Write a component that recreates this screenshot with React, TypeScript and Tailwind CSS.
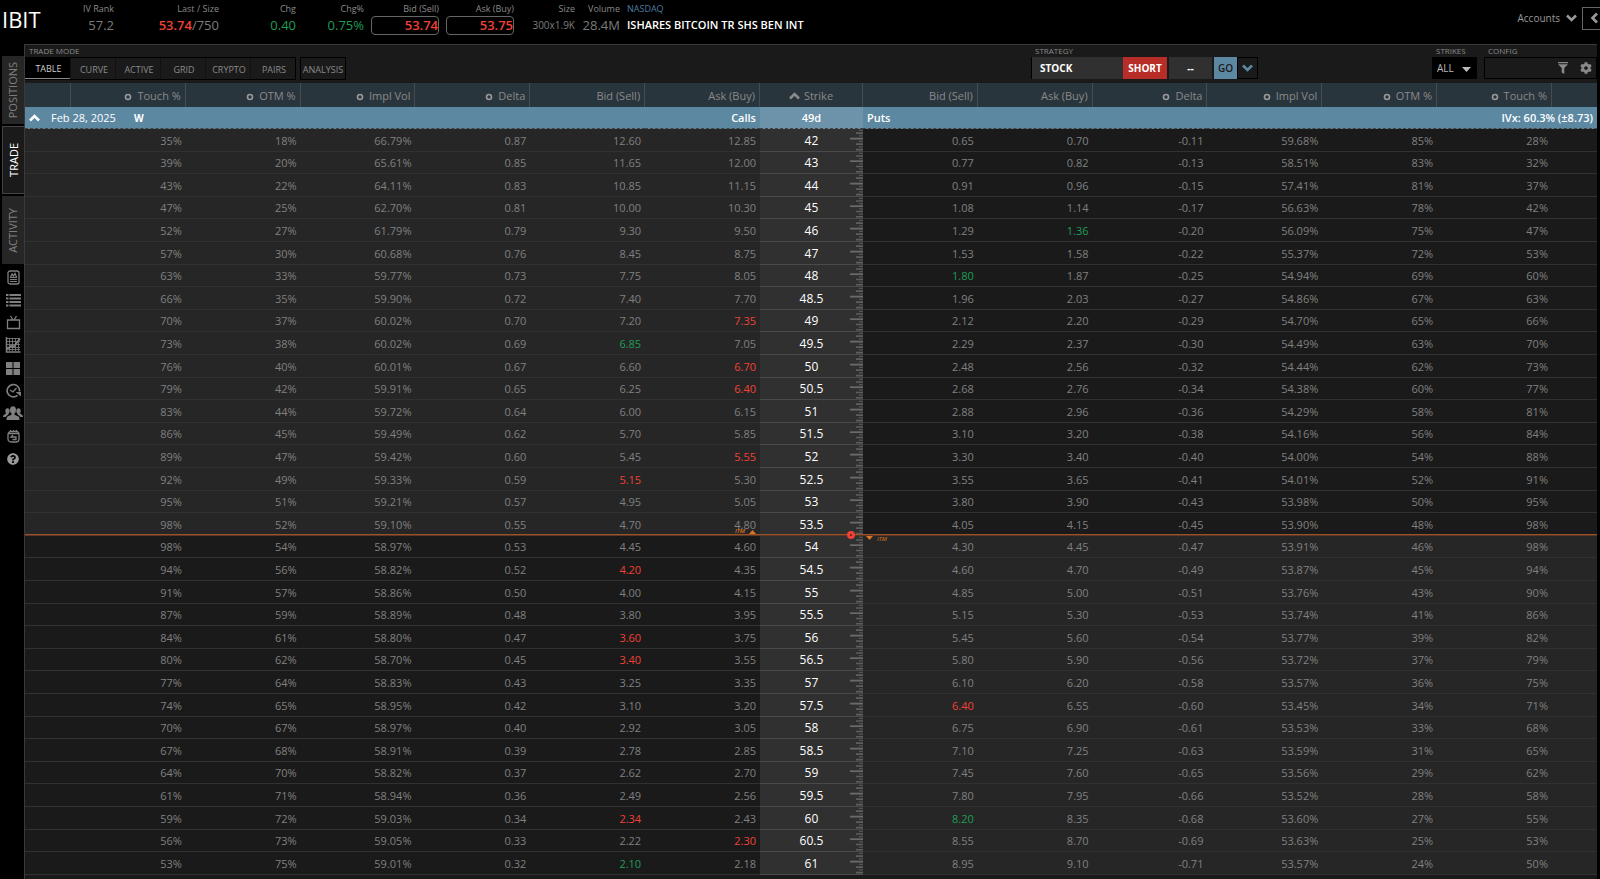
import type { ReactNode } from "react";
import clsx from "clsx";
import { FaCog, FaQuestionCircle } from "react-icons/fa";

// touch, otm, iv, delta, bid, ask | strike | bid, ask, delta, iv, otm, touch
// a trailing "r" or "g" marks a price that just ticked down or up
const chain = `35% 18% 66.79% 0.87 12.60 12.85 42 0.65 0.70 -0.11 59.68% 85% 28%
39% 20% 65.61% 0.85 11.65 12.00 43 0.77 0.82 -0.13 58.51% 83% 32%
43% 22% 64.11% 0.83 10.85 11.15 44 0.91 0.96 -0.15 57.41% 81% 37%
47% 25% 62.70% 0.81 10.00 10.30 45 1.08 1.14 -0.17 56.63% 78% 42%
52% 27% 61.79% 0.79 9.30 9.50 46 1.29 1.36g -0.20 56.09% 75% 47%
57% 30% 60.68% 0.76 8.45 8.75 47 1.53 1.58 -0.22 55.37% 72% 53%
63% 33% 59.77% 0.73 7.75 8.05 48 1.80g 1.87 -0.25 54.94% 69% 60%
66% 35% 59.90% 0.72 7.40 7.70 48.5 1.96 2.03 -0.27 54.86% 67% 63%
70% 37% 60.02% 0.70 7.20 7.35r 49 2.12 2.20 -0.29 54.70% 65% 66%
73% 38% 60.02% 0.69 6.85g 7.05 49.5 2.29 2.37 -0.30 54.49% 63% 70%
76% 40% 60.01% 0.67 6.60 6.70r 50 2.48 2.56 -0.32 54.44% 62% 73%
79% 42% 59.91% 0.65 6.25 6.40r 50.5 2.68 2.76 -0.34 54.38% 60% 77%
83% 44% 59.72% 0.64 6.00 6.15 51 2.88 2.96 -0.36 54.29% 58% 81%
86% 45% 59.49% 0.62 5.70 5.85 51.5 3.10 3.20 -0.38 54.16% 56% 84%
89% 47% 59.42% 0.60 5.45 5.55r 52 3.30 3.40 -0.40 54.00% 54% 88%
92% 49% 59.33% 0.59 5.15r 5.30 52.5 3.55 3.65 -0.41 54.01% 52% 91%
95% 51% 59.21% 0.57 4.95 5.05 53 3.80 3.90 -0.43 53.98% 50% 95%
98% 52% 59.10% 0.55 4.70 4.80 53.5 4.05 4.15 -0.45 53.90% 48% 98%
98% 54% 58.97% 0.53 4.45 4.60 54 4.30 4.45 -0.47 53.91% 46% 98%
94% 56% 58.82% 0.52 4.20r 4.35 54.5 4.60 4.70 -0.49 53.87% 45% 94%
91% 57% 58.86% 0.50 4.00 4.15 55 4.85 5.00 -0.51 53.76% 43% 90%
87% 59% 58.89% 0.48 3.80 3.95 55.5 5.15 5.30 -0.53 53.74% 41% 86%
84% 61% 58.80% 0.47 3.60r 3.75 56 5.45 5.60 -0.54 53.77% 39% 82%
80% 62% 58.70% 0.45 3.40r 3.55 56.5 5.80 5.90 -0.56 53.72% 37% 79%
77% 64% 58.83% 0.43 3.25 3.35 57 6.10 6.20 -0.58 53.57% 36% 75%
74% 65% 58.95% 0.42 3.10 3.20 57.5 6.40r 6.55 -0.60 53.45% 34% 71%
70% 67% 58.97% 0.40 2.92 3.05 58 6.75 6.90 -0.61 53.53% 33% 68%
67% 68% 58.91% 0.39 2.78 2.85 58.5 7.10 7.25 -0.63 53.59% 31% 65%
64% 70% 58.82% 0.37 2.62 2.70 59 7.45 7.60 -0.65 53.56% 29% 62%
61% 71% 58.94% 0.36 2.49 2.56 59.5 7.80 7.95 -0.66 53.52% 28% 58%
59% 72% 59.03% 0.34 2.34r 2.43 60 8.20g 8.35 -0.68 53.60% 27% 55%
56% 73% 59.05% 0.33 2.22 2.30r 60.5 8.55 8.70 -0.69 53.63% 25% 53%
53% 75% 59.01% 0.32 2.10g 2.18 61 8.95 9.10 -0.71 53.57% 24% 50%`
  .split("\n")
  .map((line) => line.split(" "));

const lastPrice = 53.74;

const callHeads = ["Touch %", "OTM %", "Impl Vol", "Delta", "Bid (Sell)", "Ask (Buy)"];
const putHeads = [...callHeads.slice(4), "Delta", "Impl Vol", "OTM %", "Touch %"];
const modes = ["TABLE", "CURVE", "ACTIVE", "GRID", "CRYPTO", "PAIRS"];

const Chevron = ({ className }: { className?: string }) => (
  <svg className={className} width="11" height="8" viewBox="0 0 11 8">
    <path d="M1 1.500L5.500 6L10 1.500" fill="none" stroke="currentColor" strokeWidth="2.600" />
  </svg>
);

const Quote = ({ label, width, children }: { label: string; width: string; children: ReactNode }) => (
  <div className={clsx("flex shrink-0 flex-col items-end whitespace-nowrap", width)}>
    <span className="h-3 text-[9px] leading-3 font-medium text-[#8a8a8a]">{label}</span>
    <div className="flex h-5 items-center text-[13px] leading-5 text-[#7c7c7c]">{children}</div>
  </div>
);

const PriceBox = ({ children }: { children: ReactNode }) => (
  <button className="h-[19px] w-[68px] rounded border border-[#666] text-right text-[13px] leading-4 font-semibold text-[#ef4136]">
    {children}
  </button>
);

const SideTab = ({ label, active }: { label: string; active?: boolean }) => (
  <button
    className={clsx(
      "flex h-[68px] w-[22px] items-center justify-center",
      active ? "border border-r-0 border-[#444] bg-[#1a1a1a] font-medium text-white" : "bg-[#262626] text-[#808080]"
    )}
  >
    <span className="rotate-180 text-[11px] leading-4 [writing-mode:vertical-rl]">{label}</span>
  </button>
);

const SideIcon = ({ name, children }: { name: string; children: ReactNode }) => (
  <button aria-label={name} className="flex flex-1 items-center justify-center text-[#808080]">
    {children}
  </button>
);

const Line = ({ children }: { children: ReactNode }) => (
  <svg width="15" height="15" viewBox="0 0 15 15" fill="none" stroke="currentColor" strokeWidth="1.3">
    {children}
  </svg>
);

const Sidebar = () => (
  <nav className="flex w-[24px] shrink-0 flex-col items-end gap-[2px] pt-3">
    <SideTab label="POSITIONS" />
    <SideTab label="TRADE" active />
    <SideTab label="ACTIVITY" />
    <div className="flex h-[204px] w-[22px] flex-col">
      <SideIcon name="Quotes">
        <Line>
          <rect x="2" y="1" width="11" height="13" rx="2" />
          <path d="M4 7.500h7M4 9.500h7M4 11.500h7" strokeWidth="1" />
          <path d="M4.500 7l1.500-3 1.500 2L9 3.500l1.500 3.500" />
        </Line>
      </SideIcon>
      <SideIcon name="Watchlist">
        <Line>
          <path d="M0 2h2.500M0 5.500h2.500M0 9h2.500M0 12.500h2.500M3.500 2H15M3.500 5.500H15M3.500 9H15M3.500 12.500H15" strokeWidth="1.900" />
        </Line>
      </SideIcon>
      <SideIcon name="Live video">
        <Line>
          <path d="M1.500 5h12v8.500h-12zM4.500 1l2.500 4M10.500 1L8 5" />
        </Line>
      </SideIcon>
      <SideIcon name="Charts">
        <svg width="16" height="16" viewBox="0 0 16 16" fill="none" stroke="currentColor">
          <path d="M1.500 0v15h14" strokeWidth="1.500" />
          <path d="M1 1.500h14M1 4.500h14M1 7.500h14M1 10.500h14M1 12.500h14M4.500 1v13M7.500 1v13M10.500 1v13M13.500 1v13" strokeWidth=".8" />
          <path d="M2 12l4-3 3 .5 6-8" strokeWidth="1.800" />
        </svg>
      </SideIcon>
      <SideIcon name="Grid">
        <svg width="14" height="13" viewBox="0 0 14 13" fill="currentColor">
          <path d="M0 0h6.500v6H0zM7.500 0H14v6H7.500zM0 7h6.500v6H0zM7.500 7H14v6H7.500z" />
        </svg>
      </SideIcon>
      <SideIcon name="History">
        <Line>
          <path d="M11.500 12.300A6.200 6.200 0 1 1 13.500 8.500" strokeWidth="1.700" />
          <path d="M4 7l3 2 3.500-4" />
          <path d="M9.500 9h5.500v4.500z" fill="currentColor" stroke="none" />
        </Line>
      </SideIcon>
      <SideIcon name="Follow">
        <svg className="shrink-0" width="20" height="14" viewBox="0 0 20 14" fill="currentColor">
          <ellipse cx="10" cy="4" rx="3" ry="3.800" />
          <path d="M8.500 6.500h3v2.300l4 1.700c.8.400 1 1.500 1 3.500h-13c0-2 .2-3.100 1-3.500l4-1.700z" />
          <ellipse cx="4.500" cy="5" rx="2.200" ry="2.800" />
          <ellipse cx="15.500" cy="5" rx="2.200" ry="2.800" />
          <path d="M3.500 7h2v1.500L4 9.500 2.500 11H0c0-1.200.2-1.700.9-2zM16.500 7h-2v1.500l1.500 1 1.500 1.500H20c0-1.200-.2-1.700-.9-2z" />
        </svg>
      </SideIcon>
      <SideIcon name="Calendar">
        <Line>
          <rect x="2" y="2.500" width="11" height="10.500" rx="3" />
          <path d="M2 4.500h11M4.500 1v2M7.500 1v2M10.500 1v2M7 6L5 8h5v2.500H6.500" />
        </Line>
      </SideIcon>
      <SideIcon name="Help">
        <FaQuestionCircle size={12} className="text-[#999]" />
      </SideIcon>
    </div>
  </nav>
);

const Toolbar = () => (
  <div className="flex h-[38px] items-start justify-between text-[#8a8a8a]">
    <div>
      <div className="h-3 pl-1 text-[8px] leading-3">TRADE MODE</div>
      <div className="flex gap-1">
        <div className="flex border border-l-0 border-black">
          {modes.map((mode) => (
            <button
              key={mode}
              className={clsx(
                "h-[21px] w-[45px] pt-[2px] pl-[2px] text-[9px] font-medium",
                mode === "TABLE" ? "border-b border-[#888] bg-black text-[#ccc]" : "border-l border-[#111]"
              )}
            >
              {mode}
            </button>
          ))}
        </div>
        <button className="h-[23px] w-[46px] border border-black pt-[2px] text-[9px] font-medium">ANALYSIS</button>
      </div>
    </div>

    <div className="flex">
      <div className="mr-[174px]">
        <div className="h-3 pl-1 text-[8px] leading-3">STRATEGY</div>
        <div className="flex h-[22px] border-l border-black text-[10px] font-bold text-white">
          <select aria-label="Strategy" className="w-[91px] appearance-none bg-[#303030] pt-px pl-2">
            <option>STOCK</option>
          </select>
          <button className="w-[44px] bg-[#b92d28] pt-px">SHORT</button>
          <input aria-label="Expiration" defaultValue="--" className="mx-[2px] w-[43px] bg-[#303030] pt-px text-center" />
          <button className="w-[23px] bg-[#5d88a1] pt-px font-semibold text-[#1a1a1a]">GO</button>
          <button aria-label="More strategies" className="flex w-[21px] items-center justify-center border border-black text-[#5d88a1]">
            <Chevron />
          </button>
        </div>
      </div>
      <div className="mr-[7px]">
        <label htmlFor="strikes" className="block h-3 pl-1 text-[8px] leading-3">
          STRIKES
        </label>
        <div className="relative flex">
          <select id="strikes" className="h-[22px] w-[45px] appearance-none bg-black pt-px pl-[5px] text-[10px] font-medium text-[#bbb]">
            <option>ALL</option>
          </select>
          <svg className="pointer-events-none absolute top-[10px] right-[6px]" width="9" height="5">
            <path d="M0 0h9L4.500 5z" fill="#bbb" />
          </svg>
        </div>
      </div>
      <div>
        <div className="h-3 pl-1 text-[8px] leading-3">CONFIG</div>
        <div className="flex h-[22px] w-[113px] items-center justify-end gap-3 border border-black pr-1">
          <button aria-label="Filter">
            <svg width="10" height="12" viewBox="0 0 10 12" fill="currentColor">
              <path d="M0 0h10v1.300H0zM0 2.300h10L6.300 6v6L3.700 10.500V6z" />
            </svg>
          </button>
          <button aria-label="Settings">
            <FaCog size={12} />
          </button>
        </div>
      </div>
    </div>
  </div>
);

const HeadCell = ({ label }: { label: string }) => (
  <th className="border-r border-[#454d52] pt-[2px] pr-1 text-right font-medium">
    {!label.includes("(") && (
      <svg className="mr-[5px] inline-block align-[-1px]" width="8" height="8">
        <circle cx="4" cy="4" r="2.500" fill="none" stroke="#999" strokeWidth="1.600" />
      </svg>
    )}
    {label}
  </th>
);

const Cell = ({ value, itm, children }: { value?: string; itm: boolean; children?: ReactNode }) => (
  <td
    className={clsx(
      "border-b border-[#313131] p-0 pt-px pr-1 text-right",
      itm ? "bg-[#262626]" : "bg-[#1a1a1a]",
      value?.endsWith("r") ? "text-[#ef4136]" : value?.endsWith("g") ? "text-[#1f9d57]" : "text-[#808080]"
    )}
  >
    {value?.replace(/[rg]$/, "")}
    {children}
  </td>
);

const Ruler = () => (
  <svg className="absolute top-0 right-0 h-full" width="13" viewBox="0 0 13 24" preserveAspectRatio="none">
    <path d="M9 1.500h4M9 7.500h4M9 13.500h4M9 19.500h4" stroke="#555" strokeWidth="1.500" />
    <path d="M6 4.500h7M6 16.500h7M6 22.500h7" stroke="#5e5e5e" strokeWidth="1.800" />
    <path d="M0 10.500h13" stroke="#6a6a6a" strokeWidth="2" />
  </svg>
);

// the last traded price sits on the border between the two strikes around it
const PriceLine = () => (
  <div className="pointer-events-none absolute inset-x-0 bottom-0 z-10 h-[2px] border-b border-[#5c3724] bg-[#9a5229]">
    <div className="mx-auto flex w-[103px] justify-end pr-2">
      <span className="-mt-[3px] size-2 rounded-full border-[3px] border-[#ef4136] bg-[#5a2018]" />
    </div>
    <div className="absolute right-1/2 bottom-px mr-[55px] flex items-end gap-1 text-[6px] leading-[6px] font-semibold text-[#d9771f] italic">
      ITM
      <svg width="7" height="4">
        <path d="M0 4h7L3.500 0z" fill="#d9771f" />
      </svg>
    </div>
    <div className="absolute top-[2px] left-1/2 ml-[55px] flex items-start gap-1 text-[6px] leading-[6px] font-semibold text-[#c0651f] italic">
      <svg width="7" height="4">
        <path d="M0 0h7L3.500 4z" fill="#d9771f" />
      </svg>
      ITM
    </div>
  </div>
);

const ChainRow = ({ row, marker }: { row: string[]; marker: boolean }) => {
  const strike = Number(row[6]);
  const callItm = strike < lastPrice;
  return (
    <tr className="relative h-[23px] nth-[5n+2]:h-[22px] nth-[5n+4]:h-[22px]">
      <Cell itm={callItm}>{marker && <PriceLine />}</Cell>
      {row.slice(0, 6).map((value, i) => (
        <Cell key={i} value={value} itm={callItm} />
      ))}
      <td className="relative border-b border-[#4a4a4a] bg-[#303030] p-0 pt-px text-center text-[12px] font-medium text-white">
        {row[6]}
        <Ruler />
      </td>
      {row.slice(7).map((value, i) => (
        <Cell key={i} value={value} itm={!callItm} />
      ))}
      <Cell itm={!callItm} />
    </tr>
  );
};

const OptionChain = () => (
  <table className="w-full table-fixed border-separate border-spacing-0 text-[11px] leading-4">
    <colgroup>
      <col className="w-[46px]" />
      <col span={6} />
      <col className="w-[103px]" />
      <col span={6} />
      <col className="w-[45px]" />
    </colgroup>
    <thead>
      <tr className="h-[24px] bg-[#29353c] text-[#8a8a8a]">
        <th className="border-r border-[#454d52]" />
        {callHeads.map((label) => (
          <HeadCell key={label} label={label} />
        ))}
        <th className="border-r border-[#454d52] pt-[2px] font-medium">
          <button className="inline-flex items-center gap-1">
            <Chevron className="rotate-180" />
            Strike
          </button>
        </th>
        {putHeads.map((label) => (
          <HeadCell key={label} label={label} />
        ))}
        <th />
      </tr>
    </thead>
    <tbody>
      <tr className="h-[22px] bg-[#5d88a1] text-white">
        <th colSpan={6} className="border-b border-dashed border-[#444] text-left font-medium">
          <button className="flex items-center pl-1">
            <Chevron className="rotate-180" />
            <span className="pl-[11px]">Feb 28, 2025</span>
            <span className="pl-[18px] text-[10px] leading-3 font-bold">W</span>
          </button>
        </th>
        <th className="border-b border-dashed border-[#444] pr-1 text-right font-semibold">Calls</th>
        <th className="border-b border-dashed border-[#444] bg-[#6c93a9] font-semibold">49d</th>
        <th colSpan={3} className="border-b border-dashed border-[#444] pl-1 text-left font-semibold">
          Puts
        </th>
        <th colSpan={4} className="border-b border-dashed border-[#444] pr-1 text-right font-semibold">
          IVx: 60.3% (±8.73)
        </th>
      </tr>
    </tbody>
    <tbody>
      {chain.map((row) => (
        <ChainRow key={row[6]} row={row} marker={row[6] === "53.5"} />
      ))}
    </tbody>
  </table>
);

const App = () => {
  return (
    <div className="flex h-screen flex-col overflow-hidden bg-black font-['Open_Sans','Noto_Sans',sans-serif]">
      <header className="flex h-[44px] shrink-0 pt-[3px]">
        <h1 className="w-[76px] pl-[2px] text-[22px] leading-8 text-white">IBIT</h1>
        <Quote label="IV Rank" width="w-[38px]">57.2</Quote>
        <Quote label="Last / Size" width="w-[105px]">
          <b className="font-semibold text-[#ef4136]">53.74</b>/750
        </Quote>
        <Quote label="Chg" width="w-[77px]">
          <span className="text-[#1f9d57]">0.40</span>
        </Quote>
        <Quote label="Chg%" width="w-[68px]">
          <span className="text-[#1f9d57]">0.75%</span>
        </Quote>
        <Quote label="Bid (Sell)" width="w-[75px]">
          <PriceBox>53.74</PriceBox>
        </Quote>
        <Quote label="Ask (Buy)" width="w-[75px]">
          <PriceBox>53.75</PriceBox>
        </Quote>
        <Quote label="Size" width="w-[61px]">
          <span className="text-[10px]">300x1.9K</span>
        </Quote>
        <Quote label="Volume" width="w-[45px]">28.4M</Quote>
        <div className="flex flex-col pl-[7px] whitespace-nowrap">
          <span className="h-3 text-[9px] leading-3 font-medium text-[#4d7ca0]">NASDAQ</span>
          <span className="text-[11px] leading-5 font-semibold text-white">ISHARES BITCOIN TR SHS BEN INT</span>
        </div>
        <div className="ml-auto flex h-[30px] items-center gap-[5px] text-[#999]">
          <button className="flex items-center gap-[6px] text-[10px] font-medium">
            Accounts
            <Chevron />
          </button>
          <button aria-label="Expand" className="flex h-[23px] w-[18px] items-center justify-end border border-r-0 border-[#666]">
            <Chevron className="rotate-90" />
          </button>
        </div>
      </header>
      <div className="flex min-h-0 flex-1">
        <Sidebar />
        <main className="mr-[3px] min-w-0 flex-1 overflow-hidden border-t border-l border-[#3a3a3a] bg-[#1a1a1a]">
          <Toolbar />
          <OptionChain />
        </main>
      </div>
    </div>
  );
};

export default App;
